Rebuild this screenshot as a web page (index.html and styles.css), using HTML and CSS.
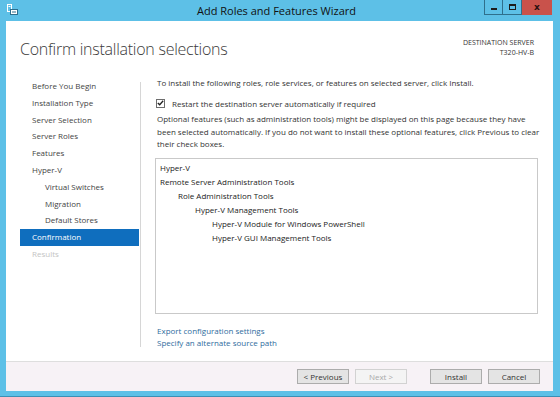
FILE: index.html
```html
<!DOCTYPE html>
<html>
<head>
<meta charset="utf-8">
<link rel="stylesheet" href="styles.css">
</head>
<body>
<div class="window">
  <div class="titlebar">
    <svg class="app-icon" width="11" height="11" viewBox="0 0 11 11">
      <rect x="0.5" y="0.5" width="4" height="7" fill="none" stroke="#fff" stroke-width="1"/>
      <line x1="1.5" y1="2.5" x2="3.5" y2="2.5" stroke="#fff"/>
      <rect x="3.5" y="5.5" width="7" height="5" fill="#fff" stroke="#2d6f8e" stroke-width="1"/>
      <line x1="5" y1="8" x2="9" y2="8" stroke="#2d6f8e"/>
    </svg>
    <div class="title">Add Roles and Features Wizard</div>
    <div class="controls">
      <div class="ctl ctl-min"><span class="min-glyph"></span></div>
      <div class="ctl ctl-max"><span class="max-glyph"></span></div>
      <div class="ctl ctl-close">x</div>
    </div>
  </div>
  <div class="client">
    <div class="header">
      <h1 class="heading">Confirm installation selections</h1>
      <div class="dest">
        <div>DESTINATION SERVER</div>
        <div>T320-HV-B</div>
      </div>
    </div>
    <div class="main">
      <ul class="nav">
        <li>Before You Begin</li>
        <li>Installation Type</li>
        <li>Server Selection</li>
        <li>Server Roles</li>
        <li>Features</li>
        <li>Hyper-V</li>
        <li class="sub">Virtual Switches</li>
        <li class="sub">Migration</li>
        <li class="sub">Default Stores</li>
        <li class="active">Confirmation</li>
        <li class="disabled">Results</li>
      </ul>
      <div class="sep"></div>
      <div class="content">
        <p class="intro">To install the following roles, role services, or features on selected server, click Install.</p>
        <label class="check-row">
          <span class="checkbox">
            <svg width="7" height="6" viewBox="0 0 7 6"><path d="M0.8 3 L2.7 4.8 L6.2 0.8" fill="none" stroke="#222" stroke-width="1.3"/></svg>
          </span>
          <span>Restart the destination server automatically if required</span>
        </label>
        <p class="optional">Optional features (such as administration tools) might be displayed on this page because they have<br>been selected automatically. If you do not want to install these optional features, click Previous to clear their check boxes.</p>
        <div class="listbox">
          <div class="li l0">Hyper-V</div>
          <div class="li l0">Remote Server Administration Tools</div>
          <div class="li l1">Role Administration Tools</div>
          <div class="li l2">Hyper-V Management Tools</div>
          <div class="li l3">Hyper-V Module for Windows PowerShell</div>
          <div class="li l3">Hyper-V GUI Management Tools</div>
        </div>
        <div class="links">
          <a class="link">Export configuration settings</a>
          <a class="link">Specify an alternate source path</a>
        </div>
      </div>
    </div>
    <div class="footer">
      <button class="btn">&lt; Previous</button>
      <button class="btn btn-disabled">Next &gt;</button>
      <button class="btn btn-install">Install</button>
      <button class="btn">Cancel</button>
    </div>
  </div>
</div>
</body>
</html>
```

FILE: styles.css
```css
* { box-sizing: border-box; }
html, body { margin: 0; padding: 0; }
body {
  width: 560px;
  height: 397px;
  overflow: hidden;
  font-family: "Open Sans", "Noto Sans", sans-serif;
  font-size: 8px;
  color: #333;
}
.window {
  width: 560px;
  height: 397px;
  background: #5dc0e7;
  border-bottom: 1px solid #3b8fb5;
  display: flex;
  flex-direction: column;
  padding: 0 7px 5px 6px;
}
.titlebar {
  height: 21px;
  flex: none;
  display: flex;
  align-items: flex-start;
  position: relative;
}
.app-icon {
  margin: 4px 0 0 1px;
}
.title {
  position: absolute;
  left: 0; right: 0;
  top: 3px;
  text-align: center;
  font-size: 11px;
  color: #111;
  margin-left: -6px;
}
.controls {
  margin-left: auto;
  margin-right: 1px;
  display: flex;
  position: relative;
  z-index: 1;
}
.ctl {
  height: 15px;
  display: flex;
  align-items: center;
  justify-content: center;
}
.ctl-min, .ctl-max {
  width: 19px;
  border: 1px solid #2f6f8c;
  border-top: none;
}
.ctl-max { border-left: none; }
.min-glyph {
  width: 6px; height: 2px; background: #1d1d1d; margin-top: 4px;
}
.max-glyph {
  width: 7px; height: 6px; border: 1px solid #1d1d1d; border-top-width: 2px;
}
.ctl-close {
  width: 30px;
  background: #c9524b;
  color: #2a1010;
  font-weight: bold;
  font-size: 9px;
  font-family: "DejaVu Sans", sans-serif;
  padding-bottom: 1px;
}
.client {
  flex: 1;
  background: #fff;
  display: flex;
  flex-direction: column;
}
.header {
  height: 54px;
  flex: none;
  display: flex;
  justify-content: space-between;
  padding: 0 14px 0 14px;
}
.heading {
  margin: 17px 0 0 0;
  font-weight: 300;
  font-size: 16px;
  line-height: 22px;
  color: #3a3a3a;
  letter-spacing: -0.25px;
}
.dest {
  margin-top: 17px;
  text-align: right;
  font-size: 7px;
  line-height: 9.5px;
  color: #333;
  margin-right: 5px;
}
.main {
  flex: 1;
  display: flex;
}
.nav {
  list-style: none;
  margin: 3px 0 0 14px;
  padding: 0;
  width: 119px;
  flex: none;
}
.nav li {
  height: 16.8px;
  line-height: 16.8px;
  padding-left: 12px;
  color: #444;
  font-size: 8px;
}
.nav li.sub { padding-left: 25px; }
.nav li.active { background: #0f6ebe; color: #fff; }
.nav li.disabled { color: #c4c4c4; }
.sep {
  width: 1px;
  background: #d6d6d6;
  margin: 7px 0 14px 1px;
  flex: none;
}
.content {
  flex: 1;
  padding: 2px 15px 0 16px;
  display: flex;
  flex-direction: column;
}
.intro {
  margin: 0;
  line-height: 12px;
}
.check-row {
  display: flex;
  align-items: center;
  margin-top: 8px;
  height: 12px;
}
.checkbox {
  width: 9px; height: 9px;
  border: 1px solid #6d6d6d;
  display: flex;
  align-items: center;
  justify-content: center;
  margin-right: 7px;
  margin-left: -1px;
}
.optional {
  margin: 4px -12px 0 0;
  line-height: 12.5px;
}
.listbox {
  margin: 7px 0 0 -2px;
  height: 156px;
  border: 1px solid #c9c9c9;
  padding: 2px 0 0 4px;
}
.li {
  line-height: 14.2px;
  height: 14.2px;
  color: #222;
}
.l1 { padding-left: 18px; }
.l2 { padding-left: 35px; }
.l3 { padding-left: 52px; }
.links {
  margin-top: 11px;
  display: flex;
  flex-direction: column;
  line-height: 12px;
}
.link { color: #2f6c9e; }
.footer {
  height: 30px;
  flex: none;
  background: #f7f2f6;
  border-top: 1px solid #dedede;
  display: flex;
  justify-content: flex-end;
  padding: 7px 13px 0 0;
}
.btn {
  width: 52px;
  height: 15px;
  padding: 0;
  font-family: inherit;
  font-size: 8px;
  color: #333;
  background: #e4e4e4;
  border: 1px solid #acacac;
  margin-left: 6px;
}
.btn-disabled {
  background: #f4f4f4;
  border-color: #d2d2d2;
  color: #a9a9a9;
}
.btn-install { margin-left: 23px; }
```
